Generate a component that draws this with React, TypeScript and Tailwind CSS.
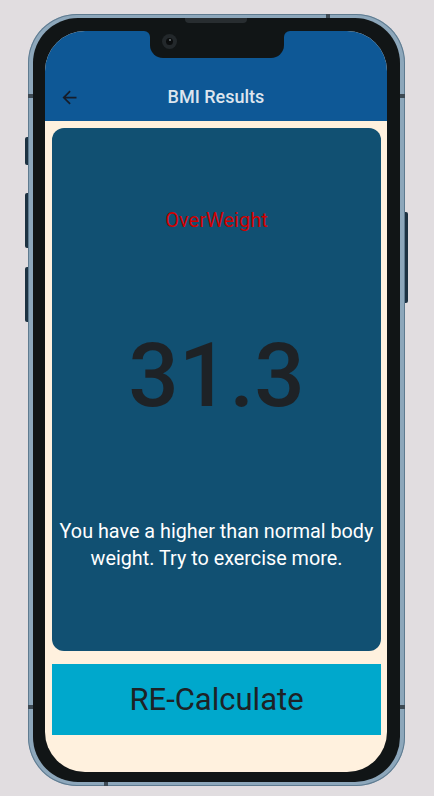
import React from "react";

export default function App() {
  return (
    <div
      className="w-[434px] h-[796px] bg-[#e1dde0] pt-[14px] pl-[28px] overflow-hidden"
      style={{ fontFamily: "Roboto, 'Noto Sans', sans-serif" }}
    >
      <div className="relative w-[377px] h-[772px] rounded-[49px] bg-[#8da7bb] px-[5px] py-[4px] shadow-[inset_0_0_0_1px_#5f7b90]">
        {/* side buttons */}
        <div className="absolute left-[-3px] top-[123px] w-[3px] h-[28px] rounded-l-[2px] bg-[#1d3242]" />
        <div className="absolute left-[-3px] top-[179px] w-[3px] h-[55px] rounded-l-[2px] bg-[#1d3242]" />
        <div className="absolute left-[-3px] top-[253px] w-[3px] h-[55px] rounded-l-[2px] bg-[#1d3242]" />
        <div className="absolute right-[-3px] top-[198px] w-[3px] h-[91px] rounded-r-[2px] bg-[#1d3242]" />
        {/* antenna marks */}
        <div className="absolute left-[298px] top-0 w-[4px] h-[4px] bg-[#3d4a54]" />
        <div className="absolute left-0 top-[80px] w-[5px] h-[4px] bg-[#3d4a54]" />
        <div className="absolute right-0 top-[80px] w-[5px] h-[4px] bg-[#3d4a54]" />
        <div className="absolute left-0 top-[691px] w-[5px] h-[4px] bg-[#3d4a54]" />
        <div className="absolute right-0 top-[691px] w-[5px] h-[4px] bg-[#3d4a54]" />
        <div className="absolute left-[76px] bottom-0 w-[4px] h-[4px] bg-[#3d4a54]" />

        <div className="relative w-full h-full rounded-[45px] bg-[#111516] pt-[13px] pl-[12px] pr-[13px] pb-[10px]">
          {/* speaker */}
          <div className="absolute left-[152px] top-0 w-[62px] h-[5px] rounded-b-[4px] bg-[#282d30]" />

          <div className="relative w-[342px] h-[741px] rounded-[40px] overflow-hidden bg-[#fff1de] flex flex-col">
            {/* notch */}
            <div className="absolute left-[99px] top-0 flex">
              <div className="w-[6px] h-[6px] bg-[#111516]">
                <div className="w-[6px] h-[6px] bg-[#0e5896] rounded-tr-[6px]" />
              </div>
              <div className="w-[134px] h-[27px] bg-[#111516] rounded-b-[13px] pl-[12px] pt-[3px]">
                <div className="w-[15px] h-[15px] rounded-full bg-[#23282b] flex items-center justify-center">
                  <div className="w-[7px] h-[7px] rounded-full bg-[#0b0d0e] flex items-start justify-center">
                    <div className="w-[2px] h-[2px] mt-[1px] rounded-full bg-[#6c7479]" />
                  </div>
                </div>
              </div>
              <div className="w-[6px] h-[6px] bg-[#111516]">
                <div className="w-[6px] h-[6px] bg-[#0e5896] rounded-tl-[6px]" />
              </div>
            </div>

            {/* app bar */}
            <div className="h-[90px] bg-[#0e5896] flex items-end shrink-0">
              <div className="h-[48px] w-full flex items-center pl-[14px] pr-[35px]">
                <svg width="21" height="21" viewBox="0 0 24 24" fill="#161d2a">
                  <path d="M20 11H7.83l5.59-5.59L12 4l-8 8 8 8 1.41-1.41L7.83 13H20v-2z" />
                </svg>
                <span className="flex-1 text-center text-[18px] font-medium text-[#dde5ee] leading-[24px]">
                  BMI Results
                </span>
              </div>
            </div>

            {/* body */}
            <div className="flex-1 flex flex-col pt-[7px] pl-[7px] pr-[6px]">
              <div className="h-[523px] rounded-[12px] bg-[#115072] flex flex-col items-center pt-[80px] px-[4px]">
                <div className="text-[20px] leading-[24px] text-[#d10000]">OverWeight</div>
                <div className="mt-[99px] text-[89px] leading-[90px] font-medium text-[#1e2226]">31.3</div>
                <div className="mt-[97px] text-[19.8px] leading-[27px] text-white text-center">
                  You have a higher than normal body
                  <br />
                  weight. Try to exercise more.
                </div>
              </div>
              <div className="mt-[13px] h-[71px] bg-[#00a8cc] flex items-center justify-center">
                <span className="text-[31px] leading-[36px] text-[#1e2226]">RE-Calculate</span>
              </div>
            </div>
          </div>
        </div>
      </div>
    </div>
  );
}
